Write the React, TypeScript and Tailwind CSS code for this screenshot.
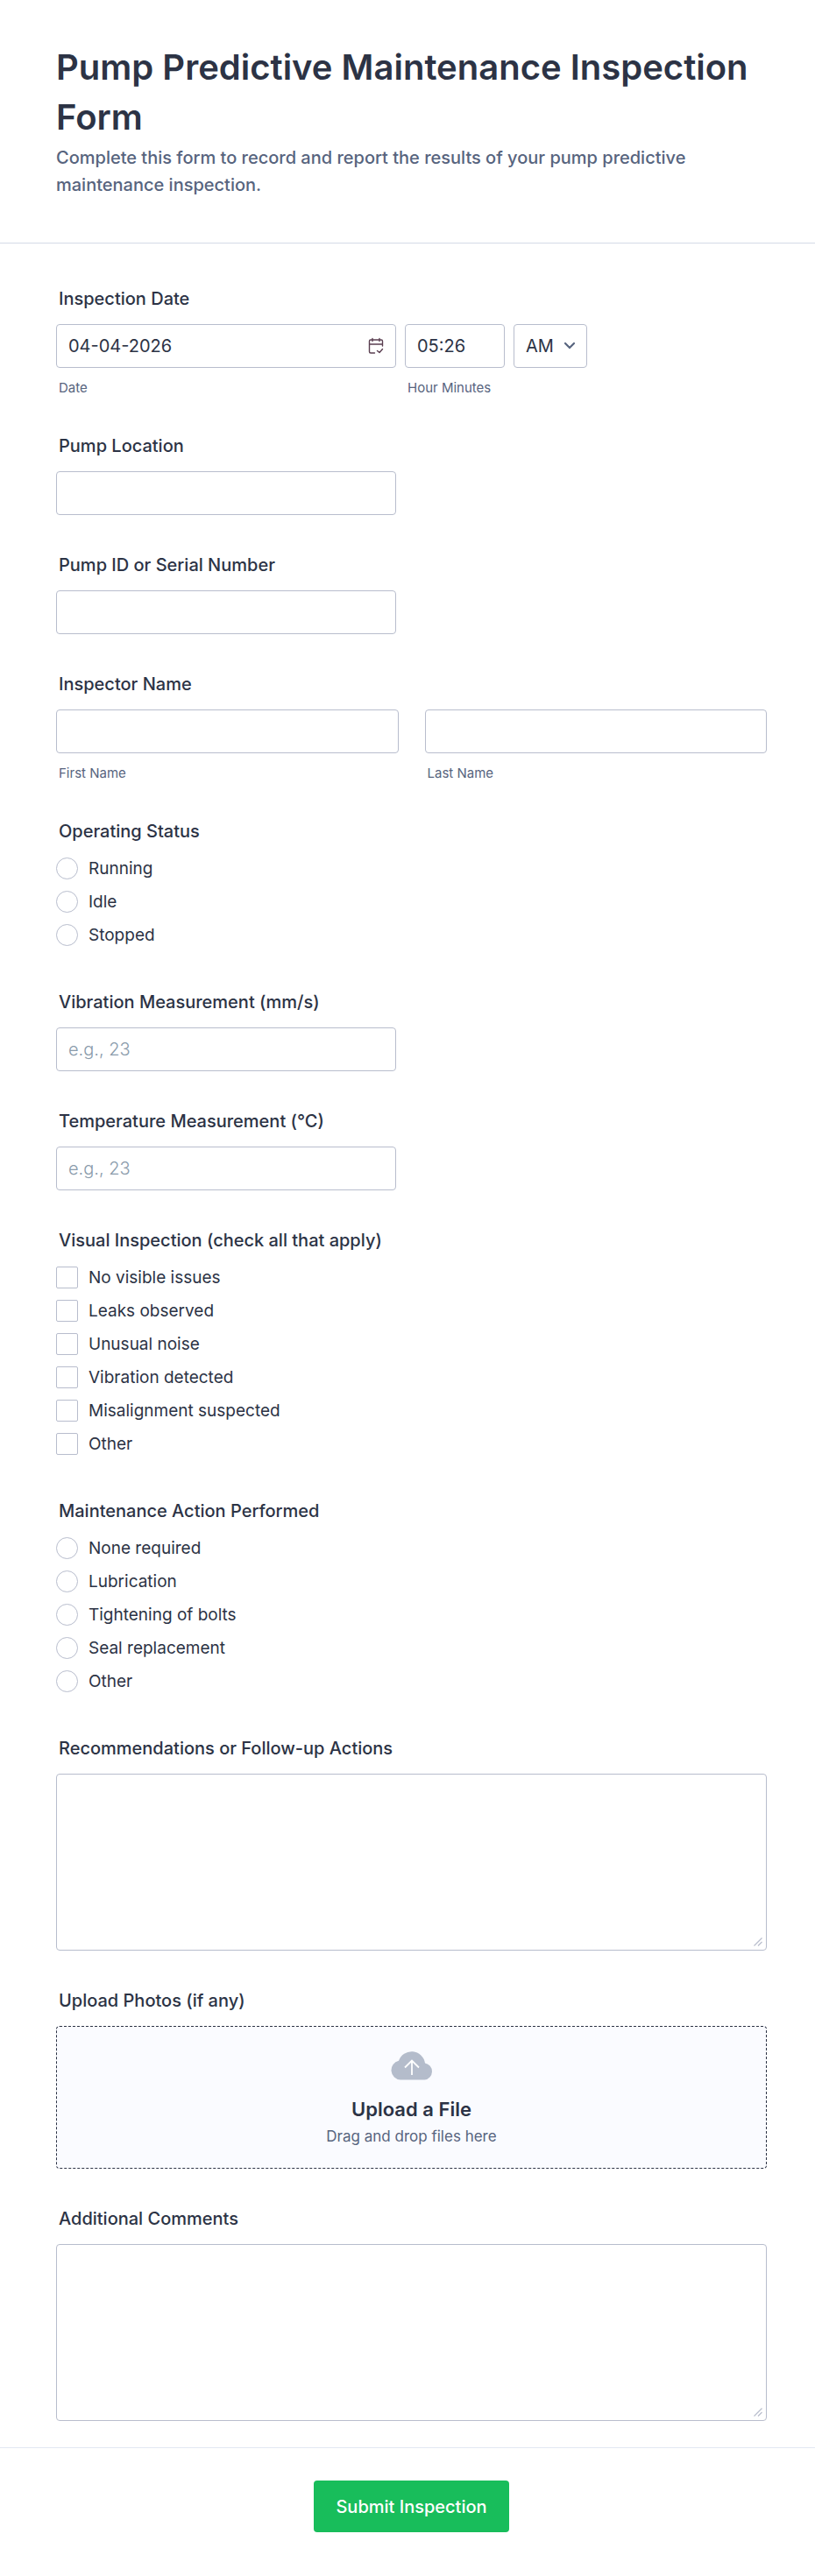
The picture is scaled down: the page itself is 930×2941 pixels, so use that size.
import type { InputHTMLAttributes, ReactNode } from 'react'

const inputClass =
  'h-[50px] w-full rounded-[4px] border border-[#b8bdcd] bg-white px-[13px] text-[20px] text-[#2c3345] placeholder:font-light placeholder:text-[#8a9bab] outline-none focus:border-blue-500'

const operatingStatus = ['Running', 'Idle', 'Stopped']

const visualChecks = [
  'No visible issues',
  'Leaks observed',
  'Unusual noise',
  'Vibration detected',
  'Misalignment suspected',
  'Other',
]

const maintenanceActions = [
  'None required',
  'Lubrication',
  'Tightening of bolts',
  'Seal replacement',
  'Other',
]

function FieldLabel({ htmlFor, children }: { htmlFor: string; children: ReactNode }) {
  return (
    <label htmlFor={htmlFor} className="block px-[3px] mb-[17px] text-[20px] leading-6 font-medium">
      {children}
    </label>
  )
}

function SubLabel({ htmlFor, children }: { htmlFor: string; children: ReactNode }) {
  return (
    <label
      htmlFor={htmlFor}
      className="block mt-[13px] px-[3px] text-[15px] leading-[19px] text-[#57647e]"
    >
      {children}
    </label>
  )
}

function TextField({
  id,
  label,
  ...props
}: { id: string; label: string } & InputHTMLAttributes<HTMLInputElement>) {
  return (
    <div>
      <FieldLabel htmlFor={id}>{label}</FieldLabel>
      <div className="max-w-[388px]">
        <input id={id} className={inputClass} {...props} />
      </div>
    </div>
  )
}

function TextAreaField({ id, label }: { id: string; label: string }) {
  return (
    <div>
      <FieldLabel htmlFor={id}>{label}</FieldLabel>
      <div className="relative">
        <textarea
          id={id}
          className="block h-[202px] w-full resize-y rounded-[4px] border border-[#b8bdcd] bg-white p-3 text-[20px] outline-none focus:border-blue-500 [&::-webkit-resizer]:hidden"
        />
        <svg
          className="pointer-events-none absolute right-[5px] bottom-[5px]"
          width="10"
          height="10"
          viewBox="0 0 10 10"
          fill="none"
          stroke="#b8bdcd"
          strokeWidth="1.2"
        >
          <path d="M.5 9.500l9-9M5 9.500l4.500-4.500" />
        </svg>
      </div>
    </div>
  )
}

function ChoiceGroup({
  type,
  name,
  legend,
  options,
}: {
  type: 'radio' | 'checkbox'
  name: string
  legend: string
  options: string[]
}) {
  return (
    <fieldset>
      <legend className="px-[3px] mb-[17px] text-[20px] leading-6 font-medium">{legend}</legend>
      <div className="flex flex-col items-start gap-[13px] pt-px pb-[7px]">
        {options.map((option) => (
          <label key={option} className="flex items-center gap-3 text-[19px] leading-[25px]">
            <input
              type={type}
              name={name}
              value={option}
              className={
                type === 'radio'
                  ? 'size-[25px] shrink-0 appearance-none rounded-full border border-[#b8bdcd] bg-white checked:border-8 checked:border-blue-500'
                  : 'size-[25px] shrink-0 appearance-none rounded-[2px] border border-[#b8bdcd] bg-white checked:bg-blue-500'
              }
            />
            {option}
          </label>
        ))}
      </div>
    </fieldset>
  )
}

function CalendarIcon() {
  return (
    <svg
      width="20"
      height="20"
      viewBox="0 0 20 20"
      fill="none"
      stroke="currentColor"
      strokeWidth="1.4"
      strokeLinecap="round"
      strokeLinejoin="round"
    >
      <path d="M8.500 18H4a1.500 1.500 0 0 1-1.500-1.500v-12A1.500 1.500 0 0 1 4 3h12a1.500 1.500 0 0 1 1.500 1.500V10M2.500 8h15M6 1.500v3M14 1.500v3" />
      <path d="m11.500 15.500 2.500 2 3.500-4" />
    </svg>
  )
}

function CloudIcon() {
  return (
    <svg width="48" height="34" viewBox="0 0 48 34">
      <path
        d="M11 33.500A11 11 0 0 1 9 11.800A15.500 15.500 0 0 1 39 14.500A9.600 9.600 0 0 1 38.500 33.500Z"
        fill="#b4bccb"
      />
      <path d="M24 28V11.500M16 19.500l8-8 8 8" fill="none" stroke="#fff" strokeWidth="1.8" />
    </svg>
  )
}

export default function App() {
  return (
    <form
      className="bg-white font-['Inter',sans-serif] text-[#2c3345]"
      onSubmit={(e) => e.preventDefault()}
    >
      <header className="border-b border-[#d5dae6] px-16 pt-12 pb-[50px]">
        <h1 className="text-[40px] leading-[57px] font-semibold">
          Pump Predictive Maintenance Inspection Form
        </h1>
        <p className="mt-[3px] text-[20px] leading-[31px] font-medium text-[#57647e]">
          Complete this form to record and report the results of your pump predictive maintenance
          inspection.
        </p>
      </header>

      <div className="flex flex-col gap-[45px] pt-[51px] pr-[55px] pb-[30px] pl-16">
        <div>
          <FieldLabel htmlFor="date">Inspection Date</FieldLabel>
          <div className="flex flex-wrap gap-2.5">
            <div className="w-[388px]">
              <div className="relative">
                <input id="date" defaultValue="04-04-2026" className={inputClass} />
                <button
                  type="button"
                  aria-label="Choose date"
                  className="absolute top-[15px] right-[13px] text-[#5a3e50]"
                >
                  <CalendarIcon />
                </button>
              </div>
              <SubLabel htmlFor="date">Date</SubLabel>
            </div>
            <div className="w-[114px]">
              <input id="time" defaultValue="05:26" className={inputClass} />
              <SubLabel htmlFor="time">Hour Minutes</SubLabel>
            </div>
            <div className="relative w-[84px]">
              <select aria-label="AM or PM" className={`${inputClass} appearance-none`}>
                <option>AM</option>
                <option>PM</option>
              </select>
              <svg
                className="pointer-events-none absolute top-[20px] right-[13px]"
                width="14"
                height="10"
                viewBox="0 0 14 10"
                fill="none"
                stroke="#57647e"
                strokeWidth="2.2"
                strokeLinecap="round"
              >
                <path d="m2 2 5 5 5-5" />
              </svg>
            </div>
          </div>
        </div>

        <TextField id="location" label="Pump Location" />
        <TextField id="serial" label="Pump ID or Serial Number" />

        <div>
          <FieldLabel htmlFor="first-name">Inspector Name</FieldLabel>
          <div className="grid grid-cols-2 gap-[30px]">
            <div>
              <input id="first-name" className={inputClass} />
              <SubLabel htmlFor="first-name">First Name</SubLabel>
            </div>
            <div>
              <input id="last-name" className={inputClass} />
              <SubLabel htmlFor="last-name">Last Name</SubLabel>
            </div>
          </div>
        </div>

        <ChoiceGroup type="radio" name="status" legend="Operating Status" options={operatingStatus} />
        <TextField id="vibration" label="Vibration Measurement (mm/s)" placeholder="e.g., 23" />
        <TextField id="temperature" label="Temperature Measurement (°C)" placeholder="e.g., 23" />
        <ChoiceGroup
          type="checkbox"
          name="visual"
          legend="Visual Inspection (check all that apply)"
          options={visualChecks}
        />
        <ChoiceGroup
          type="radio"
          name="maintenance"
          legend="Maintenance Action Performed"
          options={maintenanceActions}
        />
        <TextAreaField id="recommendations" label="Recommendations or Follow-up Actions" />

        <div>
          <FieldLabel htmlFor="photos">Upload Photos (if any)</FieldLabel>
          <label
            htmlFor="photos"
            className="flex cursor-pointer flex-col items-center rounded-[4px] border border-dashed border-[#2c3345] bg-[#fafbff] pt-[27px] pb-[22px]"
          >
            <CloudIcon />
            <span className="mt-[19px] text-[22px] leading-7 font-semibold">Upload a File</span>
            <span className="mt-1 text-[17px] leading-[27px] text-[#57647e]">
              Drag and drop files here
            </span>
            <input id="photos" type="file" multiple className="sr-only" />
          </label>
        </div>

        <TextAreaField id="comments" label="Additional Comments" />
      </div>

      <footer className="flex justify-center border-t border-[#e3e8f3] pt-[37px] pr-[55px] pb-[50px] pl-16">
        <button
          type="submit"
          className="h-[59px] rounded-[4px] bg-[#18bd5b] px-[25px] text-[20px] font-medium text-white"
        >
          Submit Inspection
        </button>
      </footer>
    </form>
  )
}
